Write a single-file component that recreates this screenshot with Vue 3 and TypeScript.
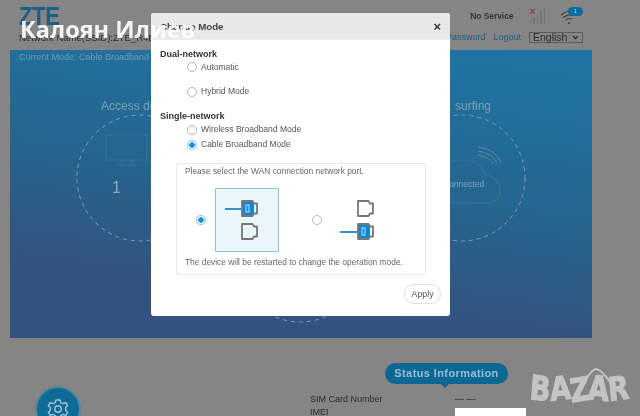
<script setup lang="ts">
import { ref } from 'vue'

const mode = ref('cable')
const wanPort = ref(1)

const dualModes = [
  { id: 'auto', label: 'Automatic' },
  { id: 'hybrid', label: 'Hybrid Mode' },
]
const singleModes = [
  { id: 'wireless', label: 'Wireless Broadband Mode' },
  { id: 'cable', label: 'Cable Broadband Mode' },
]
const bars = [4, 7, 10, 13, 16]
const portPath = 'M1 1H11.500L13 3.500H16V13.500H13L11.500 16H1Z'
</script>

<template>
  <div class="page">
    <header class="top">
      <div class="brand">
        <div class="logo">ZTE</div>
        <div class="ssid">Network Name(SSID):ZTE_R4BC2</div>
      </div>
      <div class="top-right">
        <div class="status-row">
          <span class="no-service">No Service</span>
          <span class="signal">
            <i v-for="h in bars" :key="h" :style="{ height: h + 'px' }"></i>
            <em>×</em>
          </span>
          <span class="wifi">
            <svg width="19" height="18" viewBox="0 0 19 18" fill="none" stroke="#3f3f3f" stroke-width="1.100">
              <path d="M1 8Q8 2 15 5M3 10.500Q8.500 6.500 14 8.500M5.500 13Q8.500 10.500 12 12" />
              <circle cx="9" cy="16" r="1.100" fill="#3f3f3f" stroke="none" />
            </svg>
            <b>1</b>
          </span>
        </div>
        <div class="link-row">
          <a>Password</a>
          <a>Logout</a>
          <span class="lang">English
            <svg width="7" height="5" viewBox="0 0 7 5" fill="none" stroke="#2c2c2c" stroke-width="1.300"><path d="M1 1l2.500 2.500L6 1" /></svg>
          </span>
        </div>
      </div>
    </header>

    <section class="hero">
      <p class="current">Current Mode: Cable Broadband Mode</p>
      <span class="hero-title left">Access device</span>
      <span class="hero-title right">surfing</span>

      <svg class="diagram" width="582" height="288" viewBox="0 0 582 288" fill="none">
        <g stroke="#7f9fb5" stroke-width="1" stroke-dasharray="4 4">
          <circle cx="130" cy="128" r="63" />
          <circle cx="290" cy="209" r="63" />
          <circle cx="452" cy="128" r="63" />
        </g>
        <g stroke="#3b7196" stroke-width="1.100">
          <rect x="96" y="85" width="41" height="25" rx="2" />
          <path d="M112 110l-3 5M121 110l3 5M106 115h21" />
          <path d="M440 153H476Q490 153 490 141Q490 128 475 124Q470 110 452 110Q445 110 440 112" />
        </g>
        <g stroke="#5f8aa6" stroke-width="1">
          <path d="M468 97Q486 99 491 113M468 101Q482 103 487 113M468 105Q478 107 483 113" />
        </g>
      </svg>
      <span class="count">1</span>
      <span class="connected">Connected</span>
    </section>

    <section class="lower">
      <div class="gear-wrap">
        <span class="gear">
          <svg width="24" height="24" viewBox="0 0 24 24" fill="none" stroke="#9fc3d6" stroke-width="1.400">
            <path d="M10 3h4l.8 2.600 2.500 1 2.400-1.200 2 3.400-2 1.800v2.800l2 1.800-2 3.400-2.400-1.200-2.500 1L14 21h-4l-.8-2.600-2.500-1-2.400 1.200-2-3.400 2-1.800v-2.800l-2-1.800 2-3.400 2.400 1.200 2.500-1z" stroke-linejoin="round" />
            <circle cx="12" cy="12" r="3.200" />
          </svg>
        </span>
      </div>
      <div class="status-info">
        <div class="pill">Status Information</div>
        <dl class="info">
          <dt>SIM Card Number</dt>
          <dd>— —</dd>
          <dt>IMEI</dt>
          <dd><span class="masked"></span></dd>
        </dl>
      </div>
    </section>

    <div class="modal">
      <div class="modal-head">
        <span>Change Mode</span>
        <span class="close">×</span>
      </div>
      <div class="modal-body">
        <h4>Dual-network</h4>
        <div class="dual">
          <label v-for="m in dualModes" :key="m.id" class="radio-row" @click="mode = m.id">
            <span class="radio" :class="{ on: mode === m.id }"></span>{{ m.label }}
          </label>
        </div>
        <h4 class="second">Single-network</h4>
        <div class="single">
          <label v-for="m in singleModes" :key="m.id" class="radio-row" @click="mode = m.id">
            <span class="radio" :class="{ on: mode === m.id }"></span>{{ m.label }}
          </label>
        </div>

        <div class="wan">
          <p>Please select the WAN connection network port.</p>
          <div class="ports">
            <span class="radio" :class="{ on: wanPort === 1 }" @click="wanPort = 1"></span>
            <div class="port-card" :class="{ active: wanPort === 1 }">
              <svg width="64" height="64" viewBox="0 0 64 64" fill="none">
                <g transform="translate(26 12)">
                  <rect x="1" y="2" width="12" height="13" fill="#0f87d8" />
                  <rect x="5" y="5" width="3" height="7" stroke="#bfe2f7" />
                  <path :d="portPath" stroke="#777" stroke-width="1.800" stroke-linejoin="round" />
                </g>
                <path d="M10 21H28" stroke="#3b8fc0" stroke-width="1.800" />
                <path :d="portPath" transform="translate(26 35)" stroke="#777" stroke-width="1.800" stroke-linejoin="round" />
              </svg>
            </div>
            <span class="radio second-radio" :class="{ on: wanPort === 2 }" @click="wanPort = 2"></span>
            <div class="port-card" :class="{ active: wanPort === 2 }">
              <svg width="64" height="64" viewBox="0 0 64 64" fill="none">
                <path :d="portPath" transform="translate(26 12)" stroke="#777" stroke-width="1.800" stroke-linejoin="round" />
                <g transform="translate(26 35)">
                  <rect x="1" y="2" width="12" height="13" fill="#0f87d8" />
                  <rect x="5" y="5" width="3" height="7" stroke="#bfe2f7" />
                  <path :d="portPath" stroke="#777" stroke-width="1.800" stroke-linejoin="round" />
                </g>
                <path d="M9 44H27" stroke="#3b8fc0" stroke-width="1.800" />
              </svg>
            </div>
          </div>
          <p class="note">The device will be restarted to change the operation mode.</p>
        </div>

        <div class="actions">
          <button type="button">Apply</button>
        </div>
      </div>
    </div>

    <div class="seller">Калоян Илиев</div>

    <div class="bazar">
      <svg width="34" height="18" viewBox="0 0 34 18" fill="none" stroke="#c4c4c4" stroke-width="2">
        <path d="M2 17Q12 1 16 1Q22 2 32 17" />
      </svg>
      <span class="b1">B</span><span class="b2">A</span><span class="b3">Z</span><span class="b4">A</span><span class="b5">R</span>
    </div>
  </div>
</template>

<style scoped>
.page {
  position: relative;
  width: 640px;
  height: 416px;
  overflow: hidden;
  background: #858585;
  font-family: "Liberation Sans", Arial, sans-serif;
  color: #3a3a3a;
  filter: blur(0.35px);
}

/* header */
.top {
  height: 50px;
  display: flex;
  justify-content: space-between;
  padding: 0 57px 0 19px;
}

.logo {
  margin-top: 3px;
  height: 26px;
  font-size: 26px;
  line-height: 26px;
  font-weight: 700;
  letter-spacing: -0.5px;
  color: #1b5f88;
  transform: scaleX(0.85);
  transform-origin: left center;
}

.ssid {
  margin-top: 3px;
  font-size: 9.500px;
  line-height: 11px;
  color: #2d2d2d;
  white-space: nowrap;
}

.top-right {
  display: flex;
  flex-direction: column;
  align-items: flex-end;
}

.status-row {
  height: 26px;
  margin-top: 3px;
  display: flex;
  align-items: center;
}

.no-service {
  font-size: 8.400px;
  font-weight: 700;
  color: #333;
  margin-right: 16px;
}

.signal {
  position: relative;
  display: flex;
  align-items: flex-end;
  gap: 2px;
  height: 16px;
  margin-right: 15px;
}

.signal i {
  width: 1.500px;
  background: #757575;
}

.signal em {
  position: absolute;
  left: 0;
  top: -1px;
  font-style: normal;
  font-size: 10px;
  line-height: 10px;
  font-weight: 700;
  color: #8e3b44;
}

.wifi {
  position: relative;
  display: block;
  width: 23px;
  height: 18px;
}

.wifi svg {
  display: block;
}

.wifi b {
  position: absolute;
  left: 8px;
  top: 0;
  width: 15px;
  height: 9px;
  border-radius: 5px;
  background: #0f6d9d;
  color: #a9cfe2;
  font-size: 6px;
  font-weight: 400;
  line-height: 9px;
  text-align: center;
}

.link-row {
  display: flex;
  align-items: center;
  height: 16px;
  font-size: 9px;
  color: #1d5f86;
}

.link-row a {
  margin-right: 8px;
}

.lang {
  width: 54px;
  height: 11px;
  padding: 0 3px 0 3px;
  box-sizing: border-box;
  display: flex;
  align-items: center;
  justify-content: space-between;
  border: 1px solid #5c5c5c;
  font-size: 10.500px;
  color: #2c2c2c;
}

/* hero */
.hero {
  position: relative;
  width: 582px;
  height: 288px;
  margin-left: 10px;
  background: linear-gradient(188deg, #1f76a6 0%, #24668f 45%, #34527f 80%);
}

.current {
  margin: 0;
  padding: 1px 0 0 9px;
  font-size: 9px;
  line-height: 12px;
  color: #6f9bb6;
}

.hero-title {
  position: absolute;
  top: 49px;
  font-size: 12px;
  line-height: 14px;
  color: #7d9fb5;
}

.hero-title.left {
  left: 91px;
}

.hero-title.right {
  left: 445px;
}

.diagram {
  position: absolute;
  left: 0;
  top: 0;
}

.count {
  position: absolute;
  left: 102px;
  top: 129px;
  font-size: 16px;
  line-height: 18px;
  color: #8aa9bd;
}

.connected {
  position: absolute;
  left: 433px;
  top: 129px;
  font-size: 8.500px;
  line-height: 11px;
  color: #7fa3ba;
}

/* lower section */
.lower {
  display: flex;
  height: 78px;
}

.gear-wrap {
  width: 310px;
  padding: 50px 0 0 37px;
  box-sizing: border-box;
}

.gear {
  display: flex;
  align-items: center;
  justify-content: center;
  width: 42px;
  height: 42px;
  border-radius: 50%;
  background: #0f6a96;
  box-shadow: 0 0 0 2px #57859c;
}

.status-info {
  position: relative;
  flex: 1;
}

.pill {
  position: absolute;
  left: 75px;
  top: 25px;
  width: 123px;
  height: 21px;
  border-radius: 11px;
  background: #0c6793;
  color: #94bfd4;
  font-size: 11px;
  font-weight: 700;
  line-height: 21px;
  text-align: center;
  letter-spacing: 0.400px;
}

.pill::after {
  content: "";
  position: absolute;
  left: 56px;
  bottom: -4px;
  border: 4px solid transparent;
  border-bottom: 0;
  border-top-color: #0c6793;
}

.info {
  position: absolute;
  left: 0;
  top: 55px;
  margin: 0;
  display: grid;
  grid-template-columns: 145px 80px;
  grid-auto-rows: 13px;
  font-size: 9px;
  line-height: 12px;
  color: #2b2b2b;
}

.info dd {
  margin: 0;
}

.masked {
  display: block;
  width: 71px;
  height: 20px;
  margin-top: 2px;
  background: #fff;
}

/* dialog */
.modal {
  position: absolute;
  left: 151px;
  top: 13px;
  width: 299px;
  height: 303px;
  background: #fff;
  border-radius: 3px;
  overflow: hidden;
  color: #555;
  font-size: 8.500px;
}

.modal-head {
  height: 26px;
  padding: 0 9px;
  display: flex;
  justify-content: space-between;
  align-items: center;
  background: #e8e8e8;
  border-bottom: 1px solid #efefef;
  font-size: 9.700px;
  font-weight: 700;
  color: #444;
}

.close {
  font-size: 13px;
  color: #333;
}

.modal-body {
  padding: 8px 9px 0;
}

h4 {
  margin: 0;
  font-size: 9px;
  line-height: 12px;
  font-weight: 700;
  color: #333;
}

h4.second {
  margin-top: 13px;
}

.dual {
  padding-left: 27px;
  display: flex;
  flex-direction: column;
  gap: 14.500px;
  margin-top: 2px;
}

.single {
  padding-left: 27px;
  display: flex;
  flex-direction: column;
  gap: 4px;
  margin-top: 2.500px;
}

.radio-row {
  display: flex;
  align-items: center;
  gap: 4px;
  height: 11px;
  line-height: 11px;
  cursor: pointer;
}

.dual .radio-row {
  height: 10px;
}

.radio {
  flex: none;
  display: block;
  box-sizing: border-box;
  width: 10px;
  height: 10px;
  border-radius: 50%;
  border: 1px solid #b5b5b5;
  background: #fff;
}

.radio.on {
  border-color: #8cc7ea;
  background: radial-gradient(circle, #1592dc 0 2.500px, #fff 3px);
  box-shadow: 0 0 1px #8cc7ea;
}

.wan {
  width: 250px;
  height: 112px;
  box-sizing: border-box;
  margin: 13px 0 0 16px;
  padding: 2px 8px 0;
  border: 1px solid #e9e9e9;
  border-radius: 2px;
}

.wan p {
  margin: 0;
  font-size: 8.400px;
  line-height: 11px;
  color: #666;
  white-space: nowrap;
}

.wan p.note {
  margin-top: 5px;
}

.ports {
  display: flex;
  align-items: center;
  margin-top: 11px;
  padding-left: 11px;
}

.second-radio {
  margin-left: 33px;
}

.port-card {
  box-sizing: border-box;
  width: 64px;
  height: 64px;
  margin-left: 9px;
  border: 1px solid transparent;
}

.port-card svg {
  display: block;
  margin: -1px;
}

.port-card.active {
  background: #eaf5fc;
  border-color: #8ec3de;
  border-radius: 1px;
}

.actions {
  display: flex;
  justify-content: flex-end;
  margin-top: 9px;
}

button {
  width: 37px;
  height: 20px;
  padding: 0;
  border: 1px solid #dedede;
  border-radius: 10px;
  background: #fff;
  font-family: inherit;
  font-size: 9px;
  color: #555;
}

/* overlays on top of the screenshot */
.seller {
  position: absolute;
  left: 20px;
  top: 16px;
  font-family: "Open Sans", sans-serif;
  font-size: 23.500px;
  line-height: 27px;
  font-weight: 700;
  color: rgba(255, 255, 255, 0.92);
  white-space: nowrap;
}

.bazar {
  position: absolute;
  left: 530px;
  top: 374px;
  width: 100px;
  height: 30px;
  display: flex;
  font-family: "DejaVu Sans", sans-serif;
  font-size: 27px;
  line-height: 30px;
  font-weight: 700;
  color: #c4c4c4;
  -webkit-text-stroke: 1px #c4c4c4;
}

.bazar svg {
  position: absolute;
  left: 50px;
  top: -6px;
}

.bazar span {
  display: block;
  margin-right: -1px;
}

.b1 { transform: scaleY(1.25) rotate(6deg); }
.b2 { transform: scaleY(1.2) rotate(-5deg); }
.b3 { transform: scaleY(1.2) rotate(-8deg) translateY(1px); }
.b4 { transform: scaleY(1.25) rotate(4deg); }
.b5 { transform: scaleY(1.2) rotate(-6deg); }
</style>
